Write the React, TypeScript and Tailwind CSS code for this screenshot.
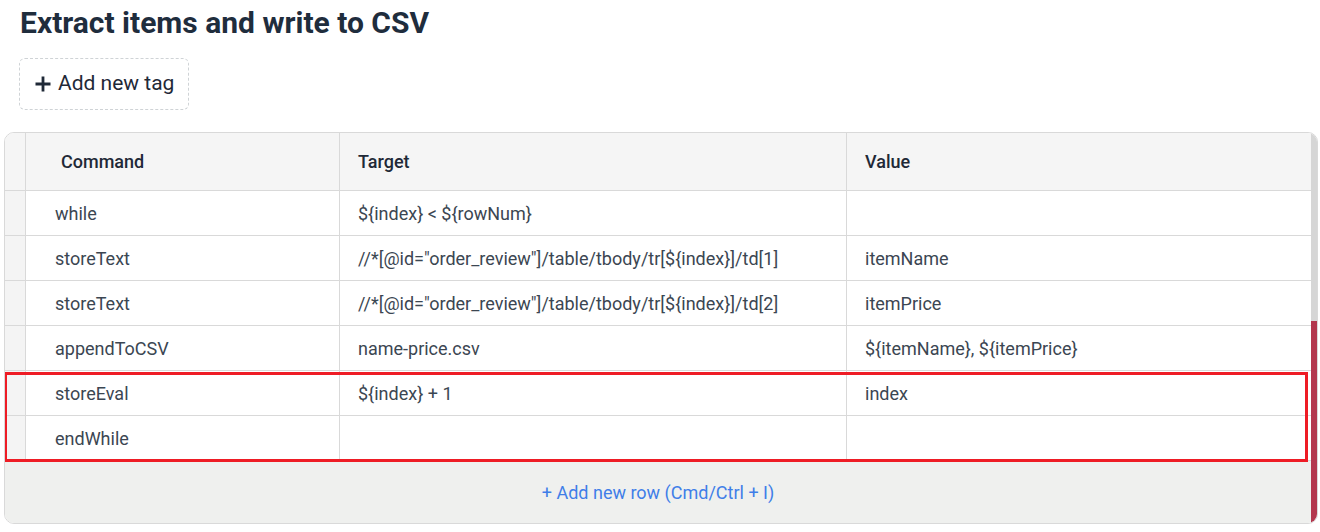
import React from 'react';

const rows = [
  { command: 'while', target: '${index} < ${rowNum}', value: '' },
  { command: 'storeText', target: '//*[@id="order_review"]/table/tbody/tr[${index}]/td[1]', value: 'itemName' },
  { command: 'storeText', target: '//*[@id="order_review"]/table/tbody/tr[${index}]/td[2]', value: 'itemPrice' },
  { command: 'appendToCSV', target: 'name-price.csv', value: '${itemName}, ${itemPrice}' },
];

const highlighted = [
  { command: 'storeEval', target: '${index} + 1', value: 'index' },
  { command: 'endWhile', target: '', value: '' },
];

function Row({ command, target, value }: { command: string; target: string; value: string }) {
  return (
    <div className="grid grid-cols-[21px_314px_507px_1fr] h-[45px] border-b border-[#d9d9d9] text-[18px] text-[#3b4652]">
      <div className="bg-[#f4f4f4] border-r border-[#d9d9d9]" />
      <div className="flex items-center pl-[29px] border-r border-[#d9d9d9]">{command}</div>
      <div className="flex items-center pl-[18px] border-r border-[#d9d9d9] whitespace-nowrap">{target}</div>
      <div className="flex items-center pl-[18px]">{value}</div>
    </div>
  );
}

export default function App() {
  return (
    <div className="min-h-screen bg-white font-['Roboto',sans-serif]">
      <h1 className="pl-[20px] pt-[5px] text-[30px] leading-[36px] font-bold text-[#1f2d3d]">
        Extract items and write to CSV
      </h1>

      <div className="pl-[19px] mt-[17px]">
        <button className="flex items-center gap-[7px] h-[52px] pl-[15px] pr-[14px] border border-dashed border-[#cfd3d6] rounded-[6px] text-[21px] text-[#1f2937]">
          <svg width="16" height="16" viewBox="0 0 16 16" className="mt-[-1px]">
            <path d="M8 0.5V15.5M0.5 8H15.5" stroke="#1f2937" strokeWidth="2.8" />
          </svg>
          Add new tag
        </button>
      </div>

      <div className="ml-[4px] mt-[22px] w-[1314px] h-[392px] border border-[#d9d9d9] rounded-[10px] overflow-hidden flex">
        <div className="flex-1 flex flex-col">
          <div className="grid grid-cols-[21px_314px_507px_1fr] h-[58px] shrink-0 bg-[#f5f5f5] border-b border-[#d9d9d9] text-[18px] font-medium text-[#1f2937]">
            <div className="border-r border-[#d9d9d9]" />
            <div className="flex items-center pl-[35px] border-r border-[#d9d9d9]">Command</div>
            <div className="flex items-center pl-[18px] border-r border-[#d9d9d9]">Target</div>
            <div className="flex items-center pl-[18px]">Value</div>
          </div>
          {rows.map((r, i) => (
            <Row key={i} {...r} />
          ))}
          <div className="relative">
            {highlighted.map((r, i) => (
              <Row key={i} {...r} />
            ))}
            <div className="absolute left-[-1px] right-[3px] top-[1px] bottom-[-1px] border-[3px] border-[#ee1c25] pointer-events-none" />
          </div>
          <div className="flex-1 bg-[#eff0ee] flex items-center justify-center text-[18px] text-[#3f7ee8]">
            + Add new row (Cmd/Ctrl + I)
          </div>
        </div>
        <div className="w-[6px] flex flex-col shrink-0">
          <div className="h-[188px] bg-[#d6d6d6]" />
          <div className="flex-1 bg-[#b3374e]" />
        </div>
      </div>
    </div>
  );
}
